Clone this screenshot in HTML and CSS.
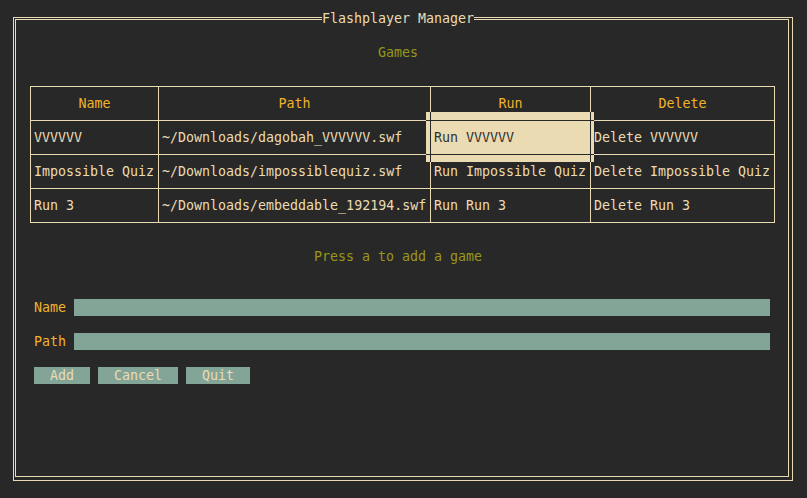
FILE: index.html
```html
<!DOCTYPE html>
<html>
<head>
<meta charset="utf-8">
<link rel="stylesheet" href="styles.css">
</head>
<body>
<div class="frame">
  <span class="title">Flashplayer Manager</span>
  <div class="inner">
    <div class="center games">Games</div>
    <div class="table">
      <div class="cell head">Name</div>
      <div class="cell head">Path</div>
      <div class="cell head">Run</div>
      <div class="cell head">Delete</div>

      <div class="cell">VVVVVV</div>
      <div class="cell">~/Downloads/dagobah_VVVVVV.swf</div>
      <div class="cell selected"><span class="txt">Run VVVVVV</span></div>
      <div class="cell">Delete VVVVVV</div>

      <div class="cell">Impossible Quiz</div>
      <div class="cell">~/Downloads/impossiblequiz.swf</div>
      <div class="cell">Run Impossible Quiz</div>
      <div class="cell">Delete Impossible Quiz</div>

      <div class="cell">Run 3</div>
      <div class="cell">~/Downloads/embeddable_192194.swf</div>
      <div class="cell">Run Run 3</div>
      <div class="cell">Delete Run 3</div>
    </div>
    <div class="center hint">Press a to add a game</div>
    <div class="form">
      <div class="field"><span class="label">Name</span><span class="input"></span></div>
      <div class="field"><span class="label">Path</span><span class="input"></span></div>
      <div class="buttons">
        <span class="btn btn-add">Add</span>
        <span class="btn btn-cancel">Cancel</span>
        <span class="btn btn-quit">Quit</span>
      </div>
    </div>
  </div>
</div>
</body>
</html>
```

FILE: styles.css
```css
html, body {
  margin: 0;
  padding: 0;
  background: #282828;
}
body {
  width: 807px;
  height: 498px;
  overflow: hidden;
  font-family: "DejaVu Sans Mono", monospace;
  font-size: 13.3px;
  line-height: 17px;
  color: #ebdbb2;
}
.frame {
  position: relative;
  margin: 17px 0 0 13px;
  width: 776px;
  height: 460px;
  border: 1px solid #ebdbb2;
  padding: 1px;
  box-sizing: content-box;
}
.title {
  position: absolute;
  top: -8px;
  left: 308px;
  width: 152px;
  height: 17px;
  background: #282828;
  color: #ebdbb2;
  white-space: nowrap;
}
.inner {
  border: 1px solid #ebdbb2;
  height: 456px;
  width: 772px;
}
.center {
  text-align: center;
  margin-right: 8px;
  white-space: nowrap;
}
.games {
  margin-top: 24px;
  color: #98971a;
}
.table {
  margin: 25px 0 0 14px;
  width: 745px;
  box-sizing: border-box;
  display: grid;
  grid-template-columns: 127px 271px 159px 183px;
  grid-auto-rows: 33px;
  gap: 1px;
  padding: 1px;
  background: #ebdbb2;
}
.cell {
  background: #282828;
  display: flex;
  align-items: center;
  padding-left: 3px;
  white-space: nowrap;
  color: #ebdbb2;
}
.cell.head {
  justify-content: center;
  padding-left: 0;
  color: #f2b22c;
}
.cell.selected {
  position: relative;
  z-index: 1;
  color: #32302f;
}
.cell.selected::before {
  content: "";
  position: absolute;
  left: -5px;
  top: -9px;
  width: 168px;
  height: 50px;
  background:
    linear-gradient(#282828, #282828) 4px 0 / 1px 100% no-repeat,
    linear-gradient(#282828, #282828) 164px 0 / 1px 100% no-repeat,
    linear-gradient(#282828, #282828) 0 8px / 100% 1px no-repeat,
    linear-gradient(#282828, #282828) 0 42px / 100% 1px no-repeat,
    #ebdbb2;
}
.cell.selected .txt {
  position: relative;
}
.hint {
  margin-top: 25px;
  color: #98971a;
}
.form {
  margin-top: 34px;
  padding-left: 18px;
  display: flex;
  flex-direction: column;
  gap: 17px;
}
.field {
  display: flex;
  height: 17px;
}
.label {
  width: 40px;
  color: #f2b22c;
}
.input {
  width: 696px;
  height: 17px;
  background: #83a598;
}
.buttons {
  display: flex;
  gap: 8px;
}
.btn {
  height: 17px;
  background: #83a598;
  color: #ebdbb2;
  text-align: center;
}
.btn-add { width: 56px; }
.btn-cancel { width: 80px; }
.btn-quit { width: 64px; }
```
